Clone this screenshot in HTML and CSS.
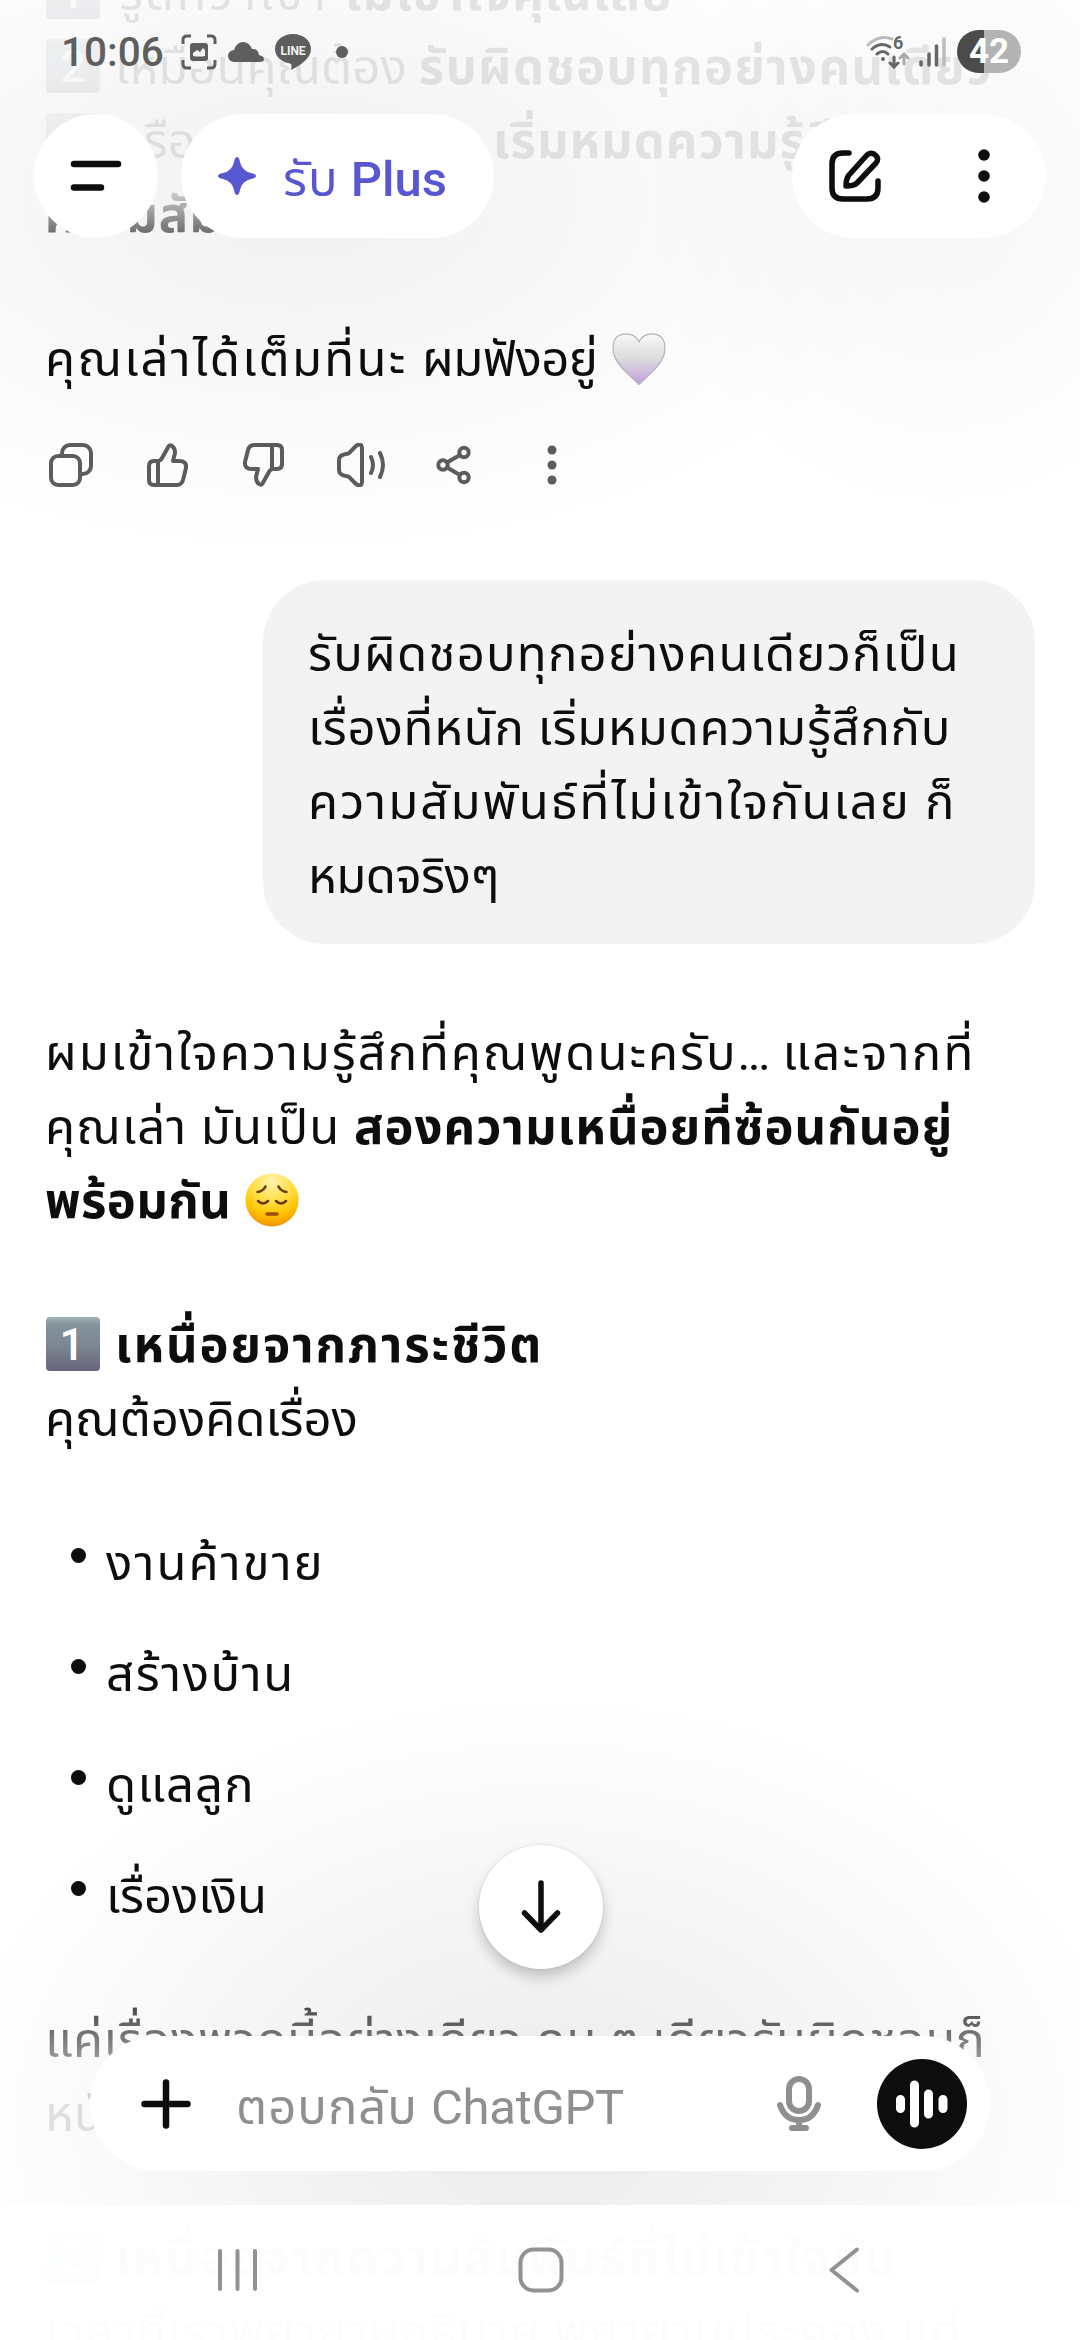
FILE: index.html
```html
<!DOCTYPE html>
<html lang="th">
<head>
<meta charset="utf-8">
<title>ChatGPT</title>
<link rel="stylesheet" href="styles.css">
</head>
<body>
<svg class="defs" width="0" height="0" aria-hidden="true">
  <defs>
    <linearGradient id="key" x1="0" y1="0" x2="0" y2="1"><stop offset="0" stop-color="#a3b2b8"/><stop offset=".15" stop-color="#83939c"/><stop offset=".5" stop-color="#7d8894"/><stop offset="1" stop-color="#65657a"/></linearGradient>
    <linearGradient id="heart" x1="0" y1="0" x2="0" y2="1"><stop offset="0" stop-color="#fdfdfd"/><stop offset=".5" stop-color="#e0dee0"/><stop offset="1" stop-color="#c3a0e2"/></linearGradient>
    <radialGradient id="face" cx=".5" cy=".15" r=".9"><stop offset="0" stop-color="#fff3b0"/><stop offset=".4" stop-color="#ffe04a"/><stop offset=".7" stop-color="#ffc400"/><stop offset="1" stop-color="#f08a00"/></radialGradient>
  </defs>
</svg>
<main class="screen">
  <section class="chat">
    <div class="message">
      <p class="line l-a"><svg class="keycap" viewBox="0 0 54 54"><rect width="54" height="54" rx="4" fill="url(#key)"/><text x="26" y="43">1</text></svg>รู้สึกว่าเขา <b>ไม่เข้าใจคุณเลย</b></p>
      <p class="line l-b"><svg class="keycap" viewBox="0 0 54 54"><rect width="54" height="54" rx="4" fill="url(#key)"/><text x="27" y="43">2</text></svg>เหมือนคุณต้อง <b>รับผิดชอบทุกอย่างคนเดียว</b></p>
      <p class="line l-c"><svg class="keycap" viewBox="0 0 54 54"><rect width="54" height="54" rx="4" fill="url(#key)"/><text x="27" y="43">3</text></svg><span class="lead">หรือบางทีคุณแค่ </span><b>เริ่มหมดความรู้สึกกับ</b></p>
      <p class="line l-d"><b>ความสัมพันธ์</b></p>
      <p class="line gap l-e">คุณเล่าได้เต็มที่นะ <span class="tail">ผมฟังอยู่</span> <svg class="heart" viewBox="0 0 54 52"><path d="M27 9C23 0 13 0 8 2C1 5 0 14 2 22C6 34 18 42 27 51.500C36 42 48 34 52 22C54 14 53 5 46 2C41 0 31 0 27 9Z" fill="url(#heart)" stroke="#b9b3bd" stroke-width="1.200"/></svg></p>
    </div>
    <div class="actions">
      <svg viewBox="0 0 44 44"><rect x="2" y="13" width="29" height="29" rx="7"/><path d="M13 13V10a8 8 0 0 1 8-8h13a8 8 0 0 1 8 8v13a8 8 0 0 1-8 8h-3"/></svg>
      <svg viewBox="0 0 44 44"><path d="M4 23q0-5 5-5h4q2 0 3.500-2L23.500 3.500q1.500-2 3.500-.5q3 2 3 7l-2 8h6q8 0 7 7l-3 12q-1.500 5-6 5H9q-5 0-5-5ZM13 18v24"/></svg>
      <svg viewBox="0 0 44 44"><path d="M41 21q0 5-5 5h-4q-2 0-3.500 2L21.500 40.500q-1.500 2-3.500.5q-3-2-3-7l2-8h-6q-8 0-7-7L7 7q1.500-5 6-5h23q5 0 5 5ZM31 26V2"/></svg>
      <svg class="speaker" viewBox="0 0 50 44"><path d="M9 11q3 0 5-3l5-5q6-4 6 3v32q0 7-6 3l-5-5q-2-3-5-3q-7-1-7-6V17q0-5 7-6Z"/><path d="M34 14q4 8 0 16M43 10q6 12 0 24"/></svg>
      <svg viewBox="0 0 44 44"><circle cx="10" cy="22" r="4.700"/><circle cx="31" cy="9.500" r="4.700"/><circle cx="31" cy="34.500" r="4.700"/><path d="M14 19.500L27 12M14 24.500L27 32"/></svg>
      <svg class="dots" viewBox="0 0 44 44"><circle cx="23" cy="7" r="4.500"/><circle cx="23" cy="22" r="4.500"/><circle cx="23" cy="37" r="4.500"/></svg>
    </div>
    <div class="bubble">
      <p class="line l-f">รับผิดชอบทุกอย่างคนเดียวก็เป็น</p>
      <p class="line l-g">เรื่องที่หนัก เริ่มหมดความรู้สึกกับ</p>
      <p class="line l-h">ความสัมพันธ์ที่ไม่เข้าใจกันเลย ก็</p>
      <p class="line l-i">หมดจริงๆ</p>
    </div>
    <div class="message">
      <p class="line l-j">ผมเข้าใจความรู้สึกที่คุณพูดนะครับ<span class="ellipsis">...</span> <span class="tail">และจากที่</span></p>
      <p class="line l-k">คุณเล่า มันเป็น <b>สองความเหนื่อยที่ซ้อนกันอยู่</b></p>
      <p class="line l-l"><b>พร้อมกัน</b> <svg class="face" viewBox="0 0 54 54"><circle cx="27" cy="27" r="26.500" fill="url(#face)"/><path class="brow" d="M12.500 19q6-1 8-5.500M41.500 19q-6-1-8-5.500"/><path class="eye" d="M13 28q5 5 10 0M31 28q5 5 10 0"/><path class="mouth" d="M22 41h10"/></svg></p>
      <p class="line gap l-m"><svg class="keycap" viewBox="0 0 54 54"><rect width="54" height="54" rx="4" fill="url(#key)"/><text x="26" y="43">1</text></svg><b>เหนื่อยจากภาระชีวิต</b></p>
      <p class="line l-n">คุณต้องคิดเรื่อง</p>
      <ul class="list">
        <li class="line l-o">งานค้าขาย</li>
        <li class="line l-p">สร้างบ้าน</li>
        <li class="line l-q">ดูแลลูก</li>
        <li class="line l-r">เรื่องเงิน</li>
      </ul>
      <p class="line gap l-s">แค่เรื่องพวกนี้อย่างเดียว คน ๆ เดียวรับผิดชอบก็</p>
      <p class="line l-t">หนักมากแล้ว</p>
      <p class="line gap l-u"><svg class="keycap" viewBox="0 0 54 54"><rect width="54" height="54" rx="4" fill="url(#key)"/><text x="27" y="43">2</text></svg><b>เหนื่อยจากความสัมพันธ์ที่ไม่เข้าใจกัน</b></p>
      <p class="line l-v">เวลาที่เราพยายามอธิบาย พยายามประคอง แต่</p>
    </div>
  </section>

  <div class="fade fade-top"></div>
  <div class="fade fade-bottom"></div>

  <header class="top">
    <div class="status">
      <span class="clock">10:06</span>
      <svg class="shot" viewBox="0 0 36 36"><path d="M2 10V6q0-4 4-4h4M26 2h4q4 0 4 4v4M34 26v4q0 4-4 4h-4M10 34H6q-4 0-4-4v-4" fill="none" stroke="#5e5e5e" stroke-width="3"/><rect x="9" y="9" width="18" height="18" rx="3" fill="#5e5e5e"/><path d="M12 22v-3l4-3 3 2 3-4 2 2v6q-6 1-12 0Z" fill="#f3f3f3"/></svg>
      <svg class="cloud" viewBox="0 0 36 20"><path d="M6 20a6 6 0 0 1 0-12Q9 0 15 0t9 7q6-1 7 6q5 1 5 4t-4 3Z" fill="#5e5e5e"/></svg>
      <svg class="linelogo" viewBox="0 0 36 36"><path d="M18 0C8 0 0 6.500 0 15c0 8 7 13 15 14.500q2 .5 1.500 3l-.5 3.500C26 31 36 24 36 15C36 6.500 28 0 18 0Z" fill="#5e5e5e"/><text x="18" y="20.500">LINE</text></svg>
      <i class="more-dot"></i>
      <span class="spacer"></span>
      <svg class="wifi" viewBox="0 0 44 34"><g fill="none" stroke="#666" stroke-width="3" stroke-linecap="round"><path d="M2 10Q13-1 26 4" stroke="#bbb"/><path d="M6 14q9-8 18-2M11 19q6-5 11 0"/><path d="M28 22v9M24 28l4 4 4-4"/><path d="M38 29v-9M34 23l4-4 4 4" stroke="#aaa"/></g><circle cx="17" cy="24" r="2" fill="#666"/><text x="27" y="14">6</text></svg>
      <svg class="signal" viewBox="0 0 27 30"><g stroke-width="3.500" stroke-linecap="round" stroke="#666"><path d="M2 25v3M10 17v11M17.500 9v19"/><path d="M25 2v26" stroke="#bbb"/></g></svg>
      <span class="battery">42</span>
    </div>
    <div class="toolbar">
      <div class="pill menu"><svg viewBox="0 0 52 32"><path d="M4 4h44M4 27.500h27"/></svg></div>
      <div class="pill plus"><svg viewBox="0 0 38 38"><path d="M19 0q2 0 3 5q2 9 11 11q5 1 5 3t-5 3q-9 2-11 11q-1 5-3 5t-3-5q-2-9-11-11q-5-1-5-3t5-3q9-2 11-11q1-5 3-5Z"/></svg><span class="label"><span class="thin">รับ</span> Plus</span></div>
      <span class="spacer"></span>
      <div class="pill tools">
        <svg class="edit" viewBox="0 0 52 52"><path d="M20 3H14Q3 3 3 14v24q0 11 11 11h24q11 0 11-11v-7"/><path d="M38 5q3-3 7-1q6 4 2 9L28 33q-3 3-11 3q0-7 3-11Z"/></svg>
        <svg class="kebab" viewBox="0 0 12 54"><circle cx="6" cy="6" r="5.800"/><circle cx="6" cy="27" r="5.800"/><circle cx="6" cy="48" r="5.800"/></svg>
      </div>
    </div>
  </header>

  <div class="jump"><svg viewBox="0 0 40 54"><path d="M20 3v47M3.500 33L20 50L36.500 33"/></svg></div>

  <div class="composer">
    <svg class="add" viewBox="0 0 50 50"><path d="M25 3.500v43M3.500 25h43"/></svg>
    <span class="placeholder">ตอบกลับ <span class="brand">ChatGPT</span></span>
    <svg class="mic" viewBox="0 0 44 56"><rect x="12" y="3" width="20" height="32" rx="10"/><path d="M3 29Q8 44 22 44T41 29M22 44v8M15 52h14"/></svg>
    <div class="voice"><svg viewBox="0 0 52 48"><path d="M4.500 19.500v9M18.500 5v38M32.500 14v20M47 19.500v9"/></svg></div>
  </div>

  <nav class="navbar">
    <svg viewBox="0 0 46 46"><path d="M5 4v38M22.500 4v38M40 4v38"/></svg>
    <svg viewBox="0 0 46 46"><rect x="2.500" y="2.500" width="41" height="41" rx="13"/></svg>
    <svg viewBox="0 0 46 46"><path d="M36 2.500L10.500 23L36 43.500"/></svg>
  </nav>
</main>
</body>
</html>
```
FILE: styles.css
```css
* { box-sizing: border-box; }
body { margin: 0; background: #fff; }
p, ul { margin: 0; padding: 0; }
svg { display: block; flex: none; }
.defs { position: absolute; }
.screen {
  position: relative;
  width: 1080px;
  height: 2340px;
  overflow: hidden;
  background: #fff;
  color: #0d0d0d;
  font-family: Roboto, "Noto Sans Thai", "Noto Sans", sans-serif;
  font-size: 49px;
}
.chat { padding: 0 45px; margin-top: -47px; }
.line { height: 74px; line-height: 82px; white-space: pre; }
.gap { margin-top: 70px; }
.line svg { display: inline-block; }
.keycap { width: 54px; height: 54px; margin: 0 15px 0 1px; vertical-align: -9px; }
.keycap text { font: 500 44px Roboto, sans-serif; fill: #fff; text-anchor: middle; letter-spacing: 0; }
.heart { width: 54px; height: 52px; vertical-align: -9px; }
.face { width: 54px; height: 54px; margin-left: 1px; vertical-align: -9px; }
.face path { fill: none; stroke: #6b3a08; stroke-width: 2.5; stroke-linecap: round; }
.face .mouth { stroke: #a34b00; stroke-width: 3.5; }

.l-a { letter-spacing: 3px; }
.l-a .keycap { margin-right: 19px; }
.l-a b { letter-spacing: 1.5px; }
.l-b b { letter-spacing: 1.4px; }
.l-c .lead { display: inline-block; width: 378px; }
.l-c b, .l-d b { letter-spacing: 1px; }
.l-e { letter-spacing: 2.3px; }
.l-e .tail { letter-spacing: -.6px; }
.l-f { letter-spacing: 1.25px; }
.l-g { letter-spacing: .8px; }
.l-h { letter-spacing: 2.05px; }
.l-i { letter-spacing: -.5px; }
.l-j { letter-spacing: 1.95px; }
.l-j .ellipsis { letter-spacing: -2.6px; }
.l-j .tail { letter-spacing: 2.3px; }
.l-k { letter-spacing: 1.2px; }
.l-k b { letter-spacing: 1.05px; }
.l-l { letter-spacing: .4px; }
.l-m { letter-spacing: 1.9px; }
.l-o { letter-spacing: 2.1px; }
.l-p { letter-spacing: 1.6px; }
.l-q { letter-spacing: 1.2px; }
.l-s { letter-spacing: .55px; }
.l-u { letter-spacing: 1.75px; }
.l-v { letter-spacing: 1.4px; }

.actions { display: flex; gap: 52px; padding: 50px 4px 0; height: 187px; }
.actions svg { width: 44px; height: 44px; fill: none; stroke: #5d5d5d; stroke-width: 4; stroke-linecap: round; stroke-linejoin: round; }
.actions .speaker { width: 50px; margin-right: -6px; }
.actions .dots { fill: #5d5d5d; stroke: none; }

.bubble {
  width: 772px;
  margin: 0 0 69px auto;
  padding: 34px 45px;
  border-radius: 62px;
  background: #f3f3f3;
}
.list { list-style: none; display: flex; flex-direction: column; gap: 37px; margin-top: 70px; }
.list li { display: flex; padding-left: 26px; }
.list li::before { content: ""; width: 15px; height: 15px; margin: 25px 20px 0 0; border-radius: 50%; background: #0d0d0d; }

.fade { position: absolute; left: 0; width: 100%; }
.fade-top {
  top: 0; height: 560px;
  background:
    radial-gradient(ellipse 640px 360px at 300px 200px, rgba(0,0,0,.055), rgba(0,0,0,0)),
    radial-gradient(ellipse 300px 320px at 940px 200px, rgba(0,0,0,.035), rgba(0,0,0,0)),
    linear-gradient(rgba(255,255,255,.9) 185px, rgba(255,255,255,0) 275px);
}
.fade-bottom {
  top: 1640px; height: 565px;
  background:
    radial-gradient(ellipse 600px 430px at 540px 480px, rgba(0,0,0,.068) 15%, rgba(0,0,0,0)),
    linear-gradient(rgba(255,255,255,0) 325px, rgba(255,255,255,.88) 465px);
}

.top { position: absolute; inset: 0 0 auto; padding: 0 34px; }
.spacer { flex: 1; }
.status { display: flex; align-items: center; height: 114px; padding: 0 25px 11px 27px; }
.clock { width: 120px; font: 500 40.500px Roboto, sans-serif; color: #5e5e5e; }
.shot { width: 36px; height: 36px; }
.cloud { width: 36px; height: 20px; margin: 0 11px; }
.linelogo { width: 36px; height: 36px; }
.linelogo text { font: 700 12px Roboto, sans-serif; fill: #f3f3f3; text-anchor: middle; }
.more-dot { width: 12px; height: 12px; margin-left: 25px; border-radius: 50%; background: #5e5e5e; }
.wifi { width: 44px; height: 34px; }
.wifi text { font: 700 18px Roboto, sans-serif; fill: #666; }
.signal { width: 27px; height: 30px; margin: 0 11px 0 9px; }
.battery {
  width: 64px; height: 43px; border-radius: 22px;
  background: linear-gradient(90deg, #4b4b4b 42%, #b3b3b3 42%);
  color: #fff; font: 700 35px/43px Roboto, sans-serif; text-align: center;
}
.toolbar { display: flex; }
.pill { display: flex; align-items: center; height: 124px; border-radius: 62px; background: #fff; }
.menu { width: 124px; margin-right: 23px; justify-content: center; }
.menu svg { width: 52px; height: 32px; stroke: #0d0d0d; stroke-width: 6.5; stroke-linecap: round; }
.plus { width: 313px; padding-left: 37px; color: #5856d0; font-weight: 500; }
.plus svg { width: 38px; height: 38px; fill: #5856d0; margin-right: 27px; }
.plus .label { padding-top: 9px; white-space: pre; }
.plus .thin { font-weight: 400; letter-spacing: 1px; }
.tools { width: 254px; padding: 0 56px 0 37px; justify-content: space-between; }
.edit { width: 52px; height: 52px; fill: none; stroke: #0d0d0d; stroke-width: 5.5; stroke-linecap: round; stroke-linejoin: round; }
.kebab { width: 12px; height: 54px; fill: #0d0d0d; }

.jump {
  position: absolute; left: 479px; top: 1845px;
  display: flex; align-items: center; justify-content: center;
  width: 124px; height: 124px; border-radius: 50%; background: #fff;
  box-shadow: 0 8px 14px rgba(0,0,0,.2), 0 0 3px rgba(0,0,0,.1);
}
.jump svg { width: 40px; height: 54px; fill: none; stroke: #0d0d0d; stroke-width: 5.5; stroke-linecap: round; stroke-linejoin: round; }

.composer {
  position: absolute; left: 90px; top: 2036px;
  display: flex; align-items: center;
  width: 900px; height: 135px; padding: 0 23px 0 51px; border-radius: 67px; background: #fff;
}
.add { width: 50px; height: 50px; stroke: #0d0d0d; stroke-width: 6.5; stroke-linecap: round; }
.placeholder { flex: 1; margin-left: 45px; padding-top: 10px; color: #8f8f8f; white-space: pre; letter-spacing: 1px; }
.placeholder .brand { letter-spacing: -.3px; }
.mic { width: 44px; height: 56px; margin-right: 56px; fill: none; stroke: #8f8f8f; stroke-width: 6; stroke-linecap: round; }
.voice { display: flex; align-items: center; justify-content: center; width: 90px; height: 90px; border-radius: 50%; background: #0d0d0d; }
.voice svg { width: 52px; height: 48px; stroke: #fff; stroke-width: 9; stroke-linecap: round; }

.navbar {
  position: absolute; inset: auto 0 0; height: 135px;
  display: flex; justify-content: space-between; padding: 42px 213px 0 215px;
  background: rgba(255,255,255,.988);
}
.navbar svg { width: 46px; height: 46px; fill: none; stroke: #929292; stroke-width: 4; stroke-linecap: round; stroke-linejoin: round; }
```
